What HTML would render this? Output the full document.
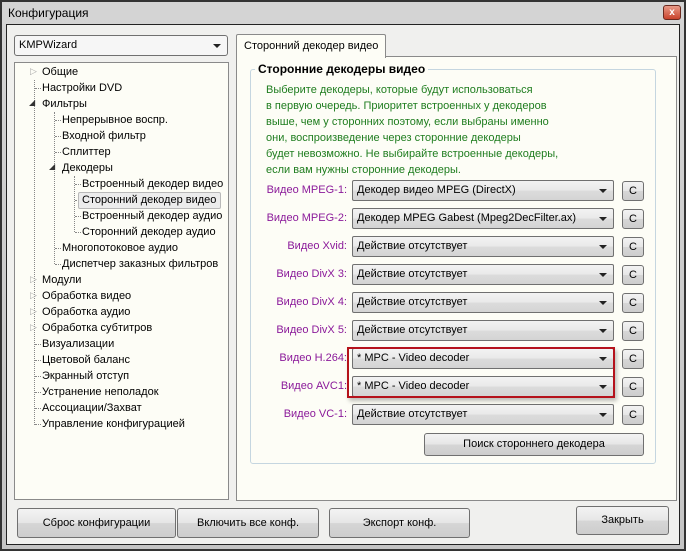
<!DOCTYPE html>
<html><head><meta charset="utf-8"><style>
*{box-sizing:border-box;margin:0;padding:0}
body{width:686px;height:551px;position:relative;background:#cfcfcf;font-family:"Liberation Sans","DejaVu Sans",sans-serif;font-size:11px;color:#000;overflow:hidden}
.a{position:absolute}
.frame{left:0;top:0;width:686px;height:551px;border:2px solid #333;background:linear-gradient(#d4d4d4,#c4c4c4)}
.body{left:6px;top:24px;width:674px;height:521px;border:1px solid #222;background:#f0f0ee}
.panel{background:#fdfdf6;border:1px solid #8a8a8a}
.btn{border:1px solid #707070;border-radius:3px;background:linear-gradient(#f3f3f3 0%,#e6e6e6 50%,#d6d6d6 51%,#cdcdcd 100%);text-align:center;font-size:11px}
.combo{border:1px solid #707070;border-radius:2px;background:linear-gradient(#f3f3f3 0%,#e9e9e9 50%,#dcdcdc 51%,#d4d4d4 100%);padding-left:4px;font-size:11px;line-height:18px;white-space:nowrap}
.combo:after{content:"";position:absolute;right:6px;top:8px;border-left:4px solid transparent;border-right:4px solid transparent;border-top:4px solid #222}
.lbl{color:#8b1a9a;text-align:right;width:120px;font-size:11px}
.t{font-size:11px;white-space:nowrap}
.g{color:#1f7d1f;font-size:11px;line-height:16px}
.dot{border-left:1px dotted #888}
.dh{border-top:1px dotted #888;height:0}
</style></head><body>
<div class="a frame"></div>
<div class="a t" style="left:8px;top:6px;font-size:12px">Конфигурация</div>
<div class="a" style="left:663px;top:5px;width:18px;height:15px;border:1px solid #6b2a20;border-radius:3px;background:linear-gradient(#e89a88,#c9432c);color:#fff;font-size:10px;font-weight:bold;text-align:center;line-height:13px">x</div>
<div class="a body"></div>
<div class="a combo" style="left:14px;top:35px;width:214px;height:21px;background:#f6f6f6;border-radius:3px;line-height:19px">KMPWizard</div>
<div class="a panel" style="left:14px;top:62px;width:215px;height:438px"></div>
<!-- tree lines -->
<div class="a dot" style="left:34px;top:80px;height:345px"></div>
<div class="a dot" style="left:54px;top:112px;height:152px"></div>
<div class="a dot" style="left:74px;top:176px;height:56px"></div>
<div class="a dh" style="left:35px;top:88px;width:6px"></div>
<div class="a dh" style="left:55px;top:120px;width:6px"></div>
<div class="a dh" style="left:55px;top:136px;width:6px"></div>
<div class="a dh" style="left:55px;top:152px;width:6px"></div>
<div class="a dh" style="left:55px;top:248px;width:6px"></div>
<div class="a dh" style="left:55px;top:264px;width:6px"></div>
<div class="a dh" style="left:75px;top:184px;width:6px"></div>
<div class="a dh" style="left:75px;top:200px;width:6px"></div>
<div class="a dh" style="left:75px;top:216px;width:6px"></div>
<div class="a dh" style="left:75px;top:232px;width:6px"></div>
<div class="a dh" style="left:35px;top:344px;width:6px"></div>
<div class="a dh" style="left:35px;top:360px;width:6px"></div>
<div class="a dh" style="left:35px;top:376px;width:6px"></div>
<div class="a dh" style="left:35px;top:392px;width:6px"></div>
<div class="a dh" style="left:35px;top:408px;width:6px"></div>
<div class="a dh" style="left:35px;top:424px;width:6px"></div>
<div class="a" style="left:78px;top:192px;width:143px;height:17px;border:1px solid #b9b9b9;border-radius:2px;background:#ececec"></div>
<div class="a t" style="left:30px;top:66px;color:#aaa;font-size:9px">▷</div>
<div class="a t" style="left:29px;top:98px;font-size:8px;color:#333">◢</div>
<div class="a t" style="left:49px;top:162px;font-size:8px;color:#333">◢</div>
<div class="a t" style="left:30px;top:274px;color:#aaa;font-size:9px">▷</div>
<div class="a t" style="left:30px;top:290px;color:#aaa;font-size:9px">▷</div>
<div class="a t" style="left:30px;top:306px;color:#aaa;font-size:9px">▷</div>
<div class="a t" style="left:30px;top:322px;color:#aaa;font-size:9px">▷</div>
<div class="a t" style="left:42px;top:66px">Общие</div>
<div class="a t" style="left:42px;top:82px">Настройки DVD</div>
<div class="a t" style="left:42px;top:98px">Фильтры</div>
<div class="a t" style="left:62px;top:114px">Непрерывное воспр.</div>
<div class="a t" style="left:62px;top:130px">Входной фильтр</div>
<div class="a t" style="left:62px;top:146px">Сплиттер</div>
<div class="a t" style="left:62px;top:162px">Декодеры</div>
<div class="a t" style="left:82px;top:178px">Встроенный декодер видео</div>
<div class="a t" style="left:82px;top:194px">Сторонний декодер видео</div>
<div class="a t" style="left:82px;top:210px">Встроенный декодер аудио</div>
<div class="a t" style="left:82px;top:226px">Сторонний декодер аудио</div>
<div class="a t" style="left:62px;top:242px">Многопотоковое аудио</div>
<div class="a t" style="left:62px;top:258px">Диспетчер заказных фильтров</div>
<div class="a t" style="left:42px;top:274px">Модули</div>
<div class="a t" style="left:42px;top:290px">Обработка видео</div>
<div class="a t" style="left:42px;top:306px">Обработка аудио</div>
<div class="a t" style="left:42px;top:322px">Обработка субтитров</div>
<div class="a t" style="left:42px;top:338px">Визуализации</div>
<div class="a t" style="left:42px;top:354px">Цветовой баланс</div>
<div class="a t" style="left:42px;top:370px">Экранный отступ</div>
<div class="a t" style="left:42px;top:386px">Устранение неполадок</div>
<div class="a t" style="left:42px;top:402px">Ассоциации/Захват</div>
<div class="a t" style="left:42px;top:418px">Управление конфигурацией</div>
<!-- tab -->
<div class="a panel" style="left:236px;top:56px;width:441px;height:445px"></div>
<div class="a" style="left:236px;top:34px;width:150px;height:24px;border:1px solid #8a8a8a;border-bottom:none;background:#fdfdf6;border-radius:2px 2px 0 0"></div>
<div class="a t" style="left:244px;top:40px">Сторонний декодер видео</div>
<div class="a" style="left:250px;top:69px;width:406px;height:395px;border:1px solid #c5d6e0;border-radius:3px"></div>
<div class="a t" style="left:255px;top:62px;background:#fdfdf6;padding:0 3px;font-weight:bold;font-size:12px">Сторонние декодеры видео</div>
<div class="a g" style="left:266px;top:82px">Выберите декодеры, которые будут использоваться<br>в первую очередь. Приоритет встроенных у декодеров<br>выше, чем у сторонних поэтому, если выбраны именно<br>они, воспроизведение через сторонние декодеры<br>будет невозможно. Не выбирайте встроенные декодеры,<br>если вам нужны сторонние декодеры.</div>
<!-- rows -->
<div class="a lbl" style="left:227px;top:184px">Видео MPEG-1:</div>
<div class="a lbl" style="left:227px;top:212px">Видео MPEG-2:</div>
<div class="a lbl" style="left:227px;top:240px">Видео Xvid:</div>
<div class="a lbl" style="left:227px;top:268px">Видео DivX 3:</div>
<div class="a lbl" style="left:227px;top:296px">Видео DivX 4:</div>
<div class="a lbl" style="left:227px;top:324px">Видео DivX 5:</div>
<div class="a lbl" style="left:227px;top:352px">Видео H.264:</div>
<div class="a lbl" style="left:227px;top:380px">Видео AVC1:</div>
<div class="a lbl" style="left:227px;top:408px">Видео VC-1:</div>
<div class="a combo" style="left:352px;top:180px;width:262px;height:21px">Декодер видео MPEG (DirectX)</div>
<div class="a combo" style="left:352px;top:208px;width:262px;height:21px">Декодер MPEG Gabest (Mpeg2DecFilter.ax)</div>
<div class="a combo" style="left:352px;top:236px;width:262px;height:21px">Действие отсутствует</div>
<div class="a combo" style="left:352px;top:264px;width:262px;height:21px">Действие отсутствует</div>
<div class="a combo" style="left:352px;top:292px;width:262px;height:21px">Действие отсутствует</div>
<div class="a combo" style="left:352px;top:320px;width:262px;height:21px">Действие отсутствует</div>
<div class="a combo" style="left:352px;top:348px;width:262px;height:21px">* MPC - Video decoder</div>
<div class="a combo" style="left:352px;top:376px;width:262px;height:21px">* MPC - Video decoder</div>
<div class="a combo" style="left:352px;top:404px;width:262px;height:21px">Действие отсутствует</div>
<div class="a" style="left:347px;top:347px;width:268px;height:51px;border:2px solid #b5121b;box-shadow:2px 3px 4px rgba(0,0,0,.25)"></div>
<div class="a btn" style="left:622px;top:181px;width:22px;height:20px;line-height:18px">C</div>
<div class="a btn" style="left:622px;top:209px;width:22px;height:20px;line-height:18px">C</div>
<div class="a btn" style="left:622px;top:237px;width:22px;height:20px;line-height:18px">C</div>
<div class="a btn" style="left:622px;top:265px;width:22px;height:20px;line-height:18px">C</div>
<div class="a btn" style="left:622px;top:293px;width:22px;height:20px;line-height:18px">C</div>
<div class="a btn" style="left:622px;top:321px;width:22px;height:20px;line-height:18px">C</div>
<div class="a btn" style="left:622px;top:349px;width:22px;height:20px;line-height:18px">C</div>
<div class="a btn" style="left:622px;top:377px;width:22px;height:20px;line-height:18px">C</div>
<div class="a btn" style="left:622px;top:405px;width:22px;height:20px;line-height:18px">C</div>
<div class="a btn" style="left:424px;top:433px;width:220px;height:23px;line-height:21px">Поиск стороннего декодера</div>
<!-- bottom -->
<div class="a btn" style="left:17px;top:508px;width:159px;height:30px;line-height:28px">Сброс конфигурации</div>
<div class="a btn" style="left:177px;top:508px;width:142px;height:30px;line-height:28px">Включить все конф.</div>
<div class="a btn" style="left:329px;top:508px;width:141px;height:30px;line-height:28px">Экспорт конф.</div>
<div class="a btn" style="left:576px;top:506px;width:93px;height:29px;line-height:27px">Закрыть</div>
</body></html>
